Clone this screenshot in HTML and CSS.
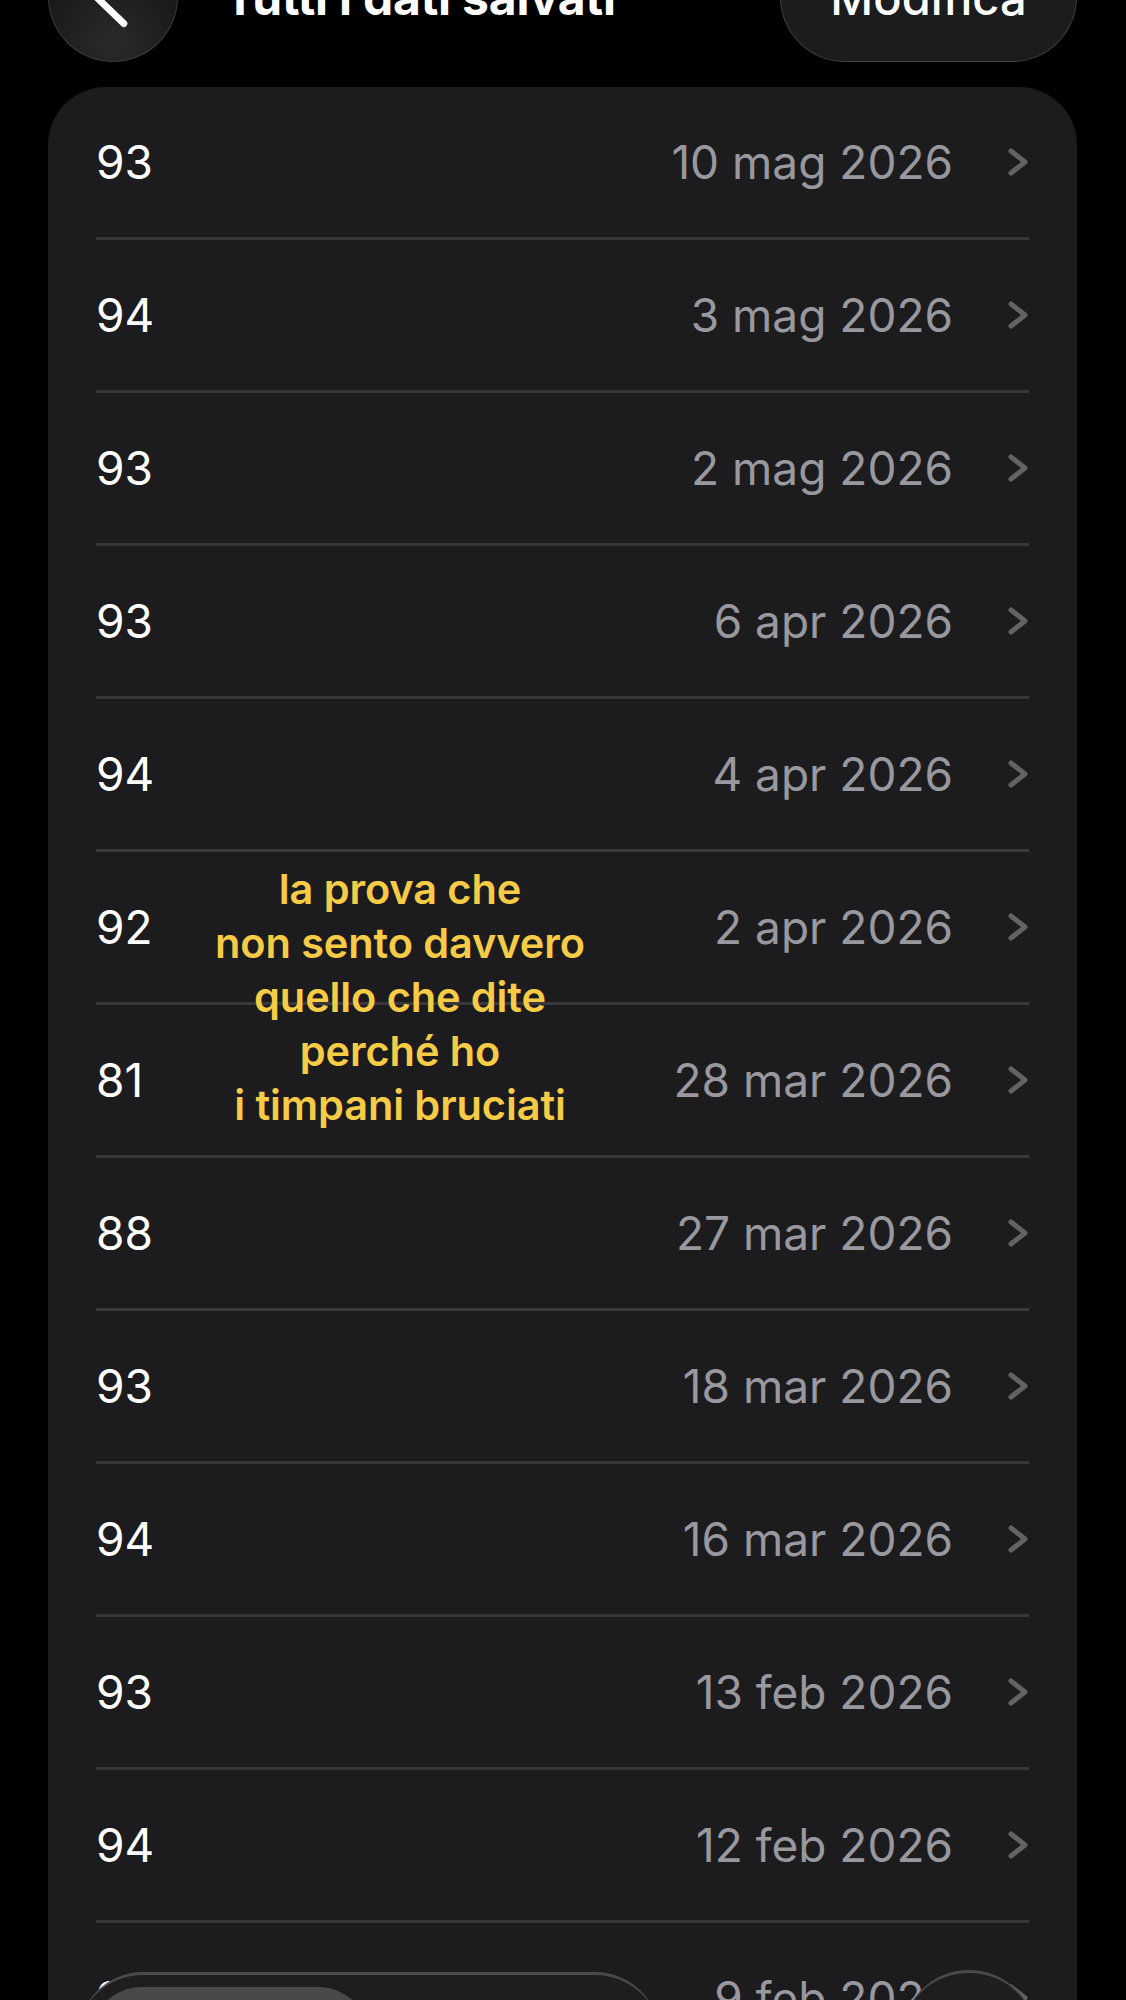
FILE: index.html
```html
<!DOCTYPE html>
<html lang="it">
<head>
<meta charset="utf-8">
<title>Tutti i dati salvati</title>
<link rel="stylesheet" href="styles.css">
</head>
<body>
<div class="screen">
  <header class="topbar">
    <button class="back-btn" aria-label="Indietro">
      <svg viewBox="0 0 130 130" width="130" height="130"><polyline points="76,36 47,64 76,92" fill="none" stroke="#fff" stroke-width="7" stroke-linecap="round" stroke-linejoin="round"/></svg>
    </button>
    <h1 class="title">Tutti i dati salvati</h1>
    <button class="edit-btn">Modifica</button>
  </header>

  <section class="card">
    <div class="row"><span class="val">93</span><span class="date">10 mag 2026</span><svg class="chev" viewBox="0 0 22 30"><polyline points="4,4 18,15 4,26"/></svg></div>
    <div class="row"><span class="val">94</span><span class="date">3 mag 2026</span><svg class="chev" viewBox="0 0 22 30"><polyline points="4,4 18,15 4,26"/></svg></div>
    <div class="row"><span class="val">93</span><span class="date">2 mag 2026</span><svg class="chev" viewBox="0 0 22 30"><polyline points="4,4 18,15 4,26"/></svg></div>
    <div class="row"><span class="val">93</span><span class="date">6 apr 2026</span><svg class="chev" viewBox="0 0 22 30"><polyline points="4,4 18,15 4,26"/></svg></div>
    <div class="row"><span class="val">94</span><span class="date">4 apr 2026</span><svg class="chev" viewBox="0 0 22 30"><polyline points="4,4 18,15 4,26"/></svg></div>
    <div class="row"><span class="val">92</span><span class="date">2 apr 2026</span><svg class="chev" viewBox="0 0 22 30"><polyline points="4,4 18,15 4,26"/></svg></div>
    <div class="row"><span class="val">81</span><span class="date">28 mar 2026</span><svg class="chev" viewBox="0 0 22 30"><polyline points="4,4 18,15 4,26"/></svg></div>
    <div class="row"><span class="val">88</span><span class="date">27 mar 2026</span><svg class="chev" viewBox="0 0 22 30"><polyline points="4,4 18,15 4,26"/></svg></div>
    <div class="row"><span class="val">93</span><span class="date">18 mar 2026</span><svg class="chev" viewBox="0 0 22 30"><polyline points="4,4 18,15 4,26"/></svg></div>
    <div class="row"><span class="val">94</span><span class="date">16 mar 2026</span><svg class="chev" viewBox="0 0 22 30"><polyline points="4,4 18,15 4,26"/></svg></div>
    <div class="row"><span class="val">93</span><span class="date">13 feb 2026</span><svg class="chev" viewBox="0 0 22 30"><polyline points="4,4 18,15 4,26"/></svg></div>
    <div class="row"><span class="val">94</span><span class="date">12 feb 2026</span><svg class="chev" viewBox="0 0 22 30"><polyline points="4,4 18,15 4,26"/></svg></div>
    <div class="row"><span class="val">93</span><span class="date">9 feb 2026</span><svg class="chev" viewBox="0 0 22 30"><polyline points="4,4 18,15 4,26"/></svg></div>
  </section>

  <div class="caption">la prova che<br>non sento davvero<br>quello che dite<br>perché ho<br>i timpani bruciati</div>

  <div class="tabbar">
    <div class="tab-pill"><div class="tab-active"></div></div>
  </div>
  <div class="tab-circle"></div>
</div>
</body>
</html>
```
FILE: styles.css
```css
html, body {
  margin: 0;
  padding: 0;
  background: #000;
}
body {
  font-family: Inter, "Noto Sans", "Liberation Sans", sans-serif;
  color: #fff;
}
.screen {
  position: relative;
  width: 1126px;
  height: 2000px;
  overflow: hidden;
  background: #000;
}
.topbar {
  display: flex;
  align-items: center;
  height: 130px;
  margin-top: -68px;
  padding: 0 49px 0 48px;
}
.back-btn {
  width: 130px;
  height: 130px;
  flex: 0 0 130px;
  border-radius: 50%;
  padding: 0;
  border: 1px solid rgba(255,255,255,0.14);
  background: radial-gradient(circle at 50% 85%, #2a2a2c 0%, #161618 70%);
  display: flex;
  align-items: center;
  justify-content: center;
}
.back-btn svg { display: block; }
.title {
  flex: 1;
  margin: 0 0 0 46px;
  font-size: 48px;
  font-weight: 700;
  letter-spacing: -0.2px;
  color: #fff;
}
.edit-btn {
  width: 297px;
  height: 130px;
  border-radius: 65px;
  border: 1px solid rgba(255,255,255,0.16);
  background: #1c1c1e;
  color: #fff;
  font-family: inherit;
  font-size: 47px;
  font-weight: 500;
  padding: 0;
}
.card {
  margin: 25px 49px 0 48px;
  background: #1c1c1e;
  border-radius: 58px;
  padding: 0 48px;
}
.row {
  display: flex;
  align-items: center;
  height: 150px;
  border-bottom: 3px solid #38383a;
  font-size: 46px;
}
.val {
  flex: 1;
  color: #fff;
}
.date {
  color: #98989e;
}
.chev {
  width: 22px;
  height: 30px;
  margin-left: 54px;
  margin-right: 0;
}
.chev polyline {
  fill: none;
  stroke: #636366;
  stroke-width: 5;
  stroke-linecap: round;
  stroke-linejoin: round;
}
.caption {
  position: absolute;
  left: 178px;
  width: 444px;
  top: 862px;
  text-align: center;
  color: #f6cb45;
  font-size: 41.5px;
  font-weight: 600;
  line-height: 54px;
  letter-spacing: -0.1px;
}
.tabbar {
  position: absolute;
  left: 78px;
  top: 1972px;
}
.tab-pill {
  width: 582px;
  height: 130px;
  border-radius: 65px;
  background: #1e1e20;
  border-top: 3px solid #4a4a4c;
  box-sizing: border-box;
  padding: 12px 12px;
}
.tab-active {
  width: 280px;
  height: 104px;
  border-radius: 52px;
  background: linear-gradient(#4a4a4c, #3a3a3c);
}
.tab-circle {
  position: absolute;
  left: 902px;
  top: 1970px;
  width: 134px;
  height: 134px;
  border-radius: 50%;
  background: #1e1e20;
  border-top: 3px solid #4a4a4c;
  box-sizing: border-box;
}
```
